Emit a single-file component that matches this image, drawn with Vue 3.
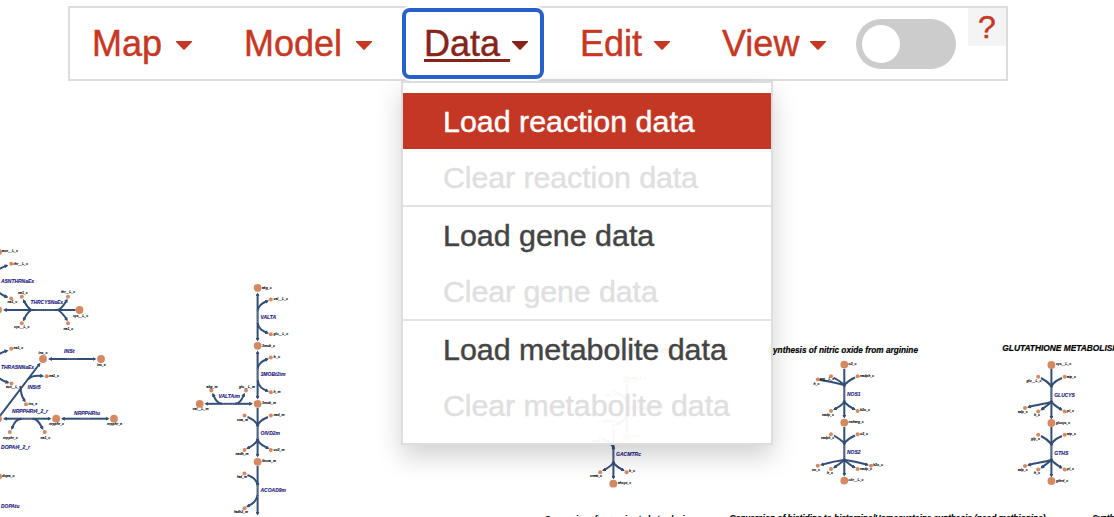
<script setup>
// Each width runs from the start of the word to the end of its caret
const menus = [
  { label: 'Map', width: 100 },
  { label: 'Model', width: 128 },
  { label: 'Data', width: 104, open: true },
  { label: 'Edit', width: 90 },
  { label: 'View', width: 104 },
]

const groups = [
  [{ label: 'Load reaction data', active: true }, { label: 'Clear reaction data', disabled: true }],
  [{ label: 'Load gene data' }, { label: 'Clear gene data', disabled: true }],
  [{ label: 'Load metabolite data' }, { label: 'Clear metabolite data', disabled: true }],
]

// Metabolite nodes: x, y, radius
const nodes = [
  [-1, 252, 3], [11.2, 263.7, 2], [11.2, 298.4, 2], [21.8, 296.8, 2], [21.8, 323.3, 2],
  [68, 296.8, 2], [68, 323.3, 2], [79.5, 310, 3.9], [-2, 310, 3.9],
  [11.2, 348.7, 2], [43, 359, 3.9], [101, 359, 3.9], [46.7, 376.2, 2], [11.5, 383.5, 2], [26, 404.2, 2],
  [-2, 418.7, 3.9], [56.2, 418.7, 3.9], [114, 418.7, 3.9], [9.8, 432, 2], [44.7, 432, 2], [-1, 476.5, 3],
  [257.6, 287.8, 3.9], [270.8, 299.5, 2], [270.8, 334.2, 2], [257.6, 345.8, 3.9], [270.8, 357.4, 2],
  [270.8, 392.2, 2], [257.6, 403.8, 3.9], [199.7, 403.8, 3.9], [211.3, 390.6, 2], [246, 390.6, 2],
  [244.5, 415.5, 2], [270.8, 415.5, 2], [244.5, 450, 2], [270.8, 450, 2], [257.6, 461.8, 3.9],
  [244.5, 473.4, 2], [244.5, 508.2, 2],
  [626.7, 379.3, 3.9], [613.4, 391.2, 2], [613.4, 425.6, 2], [626.7, 437.3, 3.9], [600, 437.5, 2],
  [600.2, 472.2, 2], [626.6, 472.2, 2], [613.3, 483.7, 3.9],
  [844.3, 364.6, 3.9], [831, 376.3, 2], [817.8, 379.6, 2], [857.6, 376.3, 2], [831, 411, 2],
  [857.6, 411, 2], [844.3, 422.6, 3.9], [831, 434.3, 2], [857.6, 434.3, 2], [817.8, 465.8, 2],
  [831, 469, 2], [857.6, 469, 2], [871, 465.8, 2], [844.3, 480.6, 3.9],
  [1051.4, 365, 3.9], [1038.2, 376.8, 2], [1064.7, 376.8, 2], [1025, 408, 2], [1038.2, 411.5, 2],
  [1064.7, 411.5, 2], [1051.4, 423, 3.9], [1038.2, 434.8, 2], [1064.7, 434.8, 2], [1025, 466, 2],
  [1038.2, 469.5, 2], [1064.7, 469.5, 2], [1051.4, 481, 3.9],
]

// Edges that end in an arrowhead
const arrows = [
  'M-8 276C-4 270 1 267.5 7 265.6', 'M-8 283C-4 291 1 295 7 297',
  'M58 310H4.5', 'M31 310C27 307 25 303 23.7 300.5', 'M31 310C27 313 25 317 23.7 320',
  'M58 310C63 308 65 303 66.8 300', 'M58 310C63 313 65 317 66.8 320',
  'M-6 358C-2 354 3 352 7 350.8', 'M70 359H49.5', 'M70 359H95',
  'M0 416L39.5 364', 'M28 379.5C31 375.5 37 375.3 42.5 376', 'M-5 374C-1 379 3 381 8 382.5', 'M20.8 388C20.5 394 22 397 24.7 401',
  'M28 418.7H4.5', 'M28 418.7H50', 'M22 418.7C16 419 14 423 12 428.5', 'M33 418.7C38 419 40 424 42.5 428.5',
  'M85 418.7H62.5', 'M85 418.7H108',
  'M257.6 317V294', 'M257.6 317V340', 'M257.6 311C258.5 305 262.5 303 267.5 301', 'M257.6 323C258.5 329 262.5 331 267.5 333',
  'M257.6 374V352', 'M257.6 374V398', 'M257.6 369C258.5 363 262.5 361 267.5 359', 'M257.6 380C258.5 387 262.5 389 267.5 391',
  'M228 403.8H206', 'M228 403.8H251.5', 'M222 403.8C217 403.5 215 399 213 394.2', 'M235 403.8C240 403.5 242 399 244.2 394.2',
  'M257.6 408V456', 'M257.6 440C255 445 252 446 247.5 448.3', 'M257.6 440C260 445 264 446 268 448.3',
  'M257.6 466V514', 'M257.6 495C256 502 252 504 247.5 506.5',
  'M626.7 408V385', 'M626.7 408V432', 'M626.7 402C625 396 621 395 617 393', 'M626.7 414C625 421 621 422 617 424.3',
  'M613.4 429V478', 'M613.4 447C610 442 607 441 603 439',
  'M613.3 463C611 466 608 468 603.5 470.3', 'M613.3 463C616 466 619 468 623.4 470.3',
  'M844.3 369V417', 'M844.3 402C842 405 839 407 834.4 409.3', 'M844.3 402C847 405 850 407 854.4 409.3',
  'M844.3 427V475', 'M844.3 460C835 461 828 463 821.5 464.8', 'M844.3 460C841 463 838 465 834.3 467.3',
  'M844.3 460C848 463 850 465 854.4 467.3', 'M844.3 460C854 461 860 463 867.5 464.8',
  'M1051.4 369V418', 'M1051.4 402C1044 404 1036 405 1028.5 407', 'M1051.4 402C1048 405 1045 407 1041.6 409.6',
  'M1051.4 402C1054 405 1057 407 1061.4 409.6',
  'M1051.4 427V476', 'M1051.4 460C1044 462 1036 463 1028.5 465', 'M1051.4 460C1048 463 1045 465 1041.6 467.6',
  'M1051.4 460C1054 463 1057 465 1061.4 467.6',
]

// Plain connecting edges
const lines = [
  'M58 310H75.5', 'M257.6 425C255 420 252 419 247.5 417', 'M257.6 425C260 420 264 419 268 417',
  'M257.6 484C255 478 252 477 247.5 475',
  'M844.3 385C841 382 838 380 833.5 377.5', 'M844.3 385C847 382 850 380 855 377.5', 'M844.3 385C836 383 827 381 819 379.8',
  'M844.3 443C841 440 838 438 834 435.5', 'M844.3 443C847 440 850 438 855 435.5',
  'M1051.4 386C1048 382 1045 380 1041 378', 'M1051.4 386C1054 382 1057 380 1062 378',
  'M1051.4 444C1048 440 1045 438 1041 436', 'M1051.4 444C1054 440 1057 438 1062 436',
]

// Junctions where side edges join the main edge
const junctions = [
  [30, 310], [60, 310], [257.6, 425], [257.6, 440], [257.6, 484], [613.4, 448], [613.4, 463],
  [844.3, 385], [844.3, 402], [844.3, 443], [844.3, 460],
  [1051.4, 386], [1051.4, 402], [1051.4, 444], [1051.4, 460],
]

// Light stretches in the middle of each reaction: x1, y1, x2, y2
const marks = [
  [35, 310, 55, 310], [67, 359, 77, 359], [22, 418.7, 33, 418.7], [81, 418.7, 90, 418.7],
  [257.6, 310, 257.6, 323], [257.6, 368, 257.6, 381], [223, 403.8, 235, 403.8], [257.6, 427, 257.6, 439],
  [257.6, 485, 257.6, 497], [613.4, 450, 613.4, 461], [844.3, 388, 844.3, 400], [844.3, 446, 844.3, 458],
  [1051.4, 388, 1051.4, 400], [1051.4, 446, 1051.4, 458],
]

// Metabolite labels: text, x, baseline, width
const labels = [
  ['asn__L_c', 2, 252.2, 16], ['thr__L_c', 13.5, 264.6, 14.5], ['na1_c', 7.5, 303, 9.5], ['na1_c', 18, 294, 9.5],
  ['cys__L_c', 14, 328.3, 15.5], ['thr__L_c', 61, 293.2, 14], ['na1_c', 63.5, 330.2, 9.5], ['cys__L_c', 73, 317, 15],
  ['na1_c', 13.5, 349.4, 9.5], ['ins_c', 38.5, 354, 9], ['ins_e', 97, 366, 8.5], ['na1_c', 49, 376.8, 10],
  ['asn__L_e', 6, 387.5, 15], ['ins_e', 28.5, 404.6, 8.5], ['nrpphr_c', 49, 425.2, 15], ['nrpphr_e', 107, 425.2, 15],
  ['nrpphr_c', 3, 439, 14.5], ['na1_c', 40.5, 439.2, 9.5], ['dopa_c', 2, 477, 12.5],
  ['akg_c', 262, 288.5, 9.5], ['val__L_c', 273.5, 299.5, 14.5], ['glu__L_c', 273.5, 334.6, 14.5],
  ['3mob_c', 262, 346.5, 13], ['h_c', 273.5, 357.8, 6.5], ['h_m', 273.5, 393, 7], ['3mob_m', 262, 404.3, 14],
  ['val__L_m', 192.5, 410.3, 16], ['akg_m', 206.5, 387.8, 11], ['glu__L_m', 239, 387.8, 16],
  ['coa_m', 237, 420.5, 11], ['nad_m', 273.5, 416, 11], ['nadh_m', 235.5, 455, 13], ['co2_m', 273.5, 450.7, 11],
  ['ibcoa_m', 262, 462.4, 14], ['fad_m', 237, 478, 10], ['fadh2_m', 234, 513.2, 14],
  ['arg__L_c', 631, 379, 15], ['gly_c', 606, 396, 9], ['gudac_c', 602, 422.3, 13], ['orn_c', 631, 437, 9],
  ['amet_c', 592, 441.5, 12], ['creat_c', 590, 477, 12], ['h_c', 629, 471.8, 6], ['ahcys_c', 618, 484.4, 13],
  ['o2_c', 848.5, 365.3, 8], ['nadph_c', 860, 376.5, 14], ['h_c', 813.5, 385, 6], ['arg__L_c', 820, 380.2, 14],
  ['nadp_c', 822, 416.2, 12], ['h2o_c', 860, 411.2, 10], ['nwharg_c', 848.5, 423.3, 15], ['nadph_c', 821, 439, 13],
  ['o2_c', 860, 434.6, 8], ['no_c', 812, 471.2, 8], ['h_c', 827, 474.2, 6], ['nadp_c', 860, 469.5, 12],
  ['h2o_c', 873, 466, 10], ['citr__L_c', 848.5, 481.3, 15],
  ['cys__L_c', 1056, 365, 15], ['glu__L_c', 1026.5, 382.2, 15], ['atp_c', 1067, 377.5, 9], ['adp_c', 1018, 413.3, 9.5],
  ['h_c', 1034, 416.2, 6], ['pi_c', 1067, 411.5, 7], ['glucys_c', 1056, 423.6, 14], ['gly_c', 1031, 440.2, 9],
  ['atp_c', 1067, 435.2, 9], ['adp_c', 1018, 471.3, 9.5], ['h_c', 1034, 474.2, 6], ['pi_c', 1067, 469.5, 7],
  ['gthrd_c', 1056, 481.7, 12],
]

// Reaction labels: text, x, baseline, width
const reactions = [
  ['ASNTHRNaEx', 1, 283.4, 33], ['THRCYSNaEx', 30.5, 304.2, 32.5], ['INSt', 64, 353.4, 10.5], ['THRASNNaEx', 1, 368.6, 33],
  ['INSt5', 27.5, 389.4, 13], ['NRPPHRt4_2_r', 12, 413.3, 36], ['NRPPHRtu', 74, 414.6, 26], ['DOPAt4_2_r', 1, 449.3, 29],
  ['DOPAtu', 1, 507.5, 18.5], ['VALTA', 260.5, 319.2, 15.5], ['3MOBt2im', 260.5, 376.3, 25], ['VALTAim', 218.5, 398.3, 21.5],
  ['OIVD2m', 260.5, 434.5, 19.5], ['ACOAD9m', 260.5, 492.3, 25.5], ['GLYAMDTRc', 630, 410, 30], ['GACMTRc', 616, 456.3, 25],
  ['NOS1', 847, 395.6, 13.5], ['NOS2', 847, 453.5, 13.5], ['GLUCYS', 1054.3, 396.5, 20.5], ['GTHS', 1054.3, 454.5, 14],
]

// Pathway titles: text, x, baseline, width
const titles = [
  ['Synthesis of nitric oxide from arginine', 767.5, 353, 150.5],
  ['GLUTATHIONE METABOLISM', 1002.3, 351.2, 117],
  ['Synthesis of creatine from arginine', 557, 353, 136],
  ['Conversion of carnosine to beta-alanine', 544.5, 521.6, 149],
  ['Conversion of histidine to histamine/Homocysteine synthesis (need methionine)', 729.5, 520.8, 316],
  ['Synthesis', 1092.5, 520.8, 37],
]
</script>

<template>
  <main class="page">
    <svg class="map" viewBox="0 0 1114 517" width="1114" height="517">
      <defs>
        <marker id="tip" viewBox="0 0 4 4" refX="2.4" refY="2" markerWidth="4" markerHeight="4" markerUnits="userSpaceOnUse" orient="auto">
          <path d="M0 0L4 2L0 4Z" fill="#334e75" />
        </marker>
      </defs>
      <g class="edges">
        <path v-for="(d, i) in arrows" :key="'a' + i" :d="d" marker-end="url(#tip)" />
        <path v-for="(d, i) in lines" :key="'l' + i" :d="d" />
        <circle v-for="(j, i) in junctions" :key="'j' + i" :cx="j[0]" :cy="j[1]" r="1.7" />
      </g>
      <line v-for="(m, i) in marks" :key="'m' + i" class="mark" :x1="m[0]" :y1="m[1]" :x2="m[2]" :y2="m[3]" />
      <circle v-for="(n, i) in nodes" :key="'n' + i" class="node" :cx="n[0]" :cy="n[1]" :r="n[2]" />
      <text v-for="(t, i) in labels" :key="'t' + i" class="label" :x="t[1]" :y="t[2]" :textLength="t[3]" lengthAdjust="spacingAndGlyphs">{{ t[0] }}</text>
      <text v-for="(t, i) in reactions" :key="'r' + i" class="reaction" :x="t[1]" :y="t[2]" :textLength="t[3]" lengthAdjust="spacingAndGlyphs">{{ t[0] }}</text>
      <text v-for="(t, i) in titles" :key="'h' + i" class="title" :x="t[1]" :y="t[2]" :textLength="t[3]" lengthAdjust="spacingAndGlyphs">{{ t[0] }}</text>
    </svg>

    <nav class="bar">
      <div v-for="m in menus" :key="m.label" class="menu" :class="{ open: m.open }" :style="{ width: m.width + 'px' }">
        <a class="trigger"><span class="word">{{ m.label + ' ' }}</span><svg class="caret" width="16" height="9" viewBox="0 0 16 9"><path d="M0 0H16V1L9 8.3Q8 9.3 7 8.3L0 1Z" /></svg></a>
        <div v-if="m.open" class="dropdown">
          <div v-for="(g, i) in groups" :key="i" class="group">
            <div v-for="it in g" :key="it.label" class="item" :class="{ active: it.active, disabled: it.disabled }">{{ it.label }}</div>
          </div>
        </div>
      </div>
      <div class="toggle"><span class="knob"></span></div>
      <div class="help">?</div>
    </nav>
  </main>
</template>

<style>
body {
  background: #fff;
  overflow: hidden;
}
</style>

<style scoped>
.page {
  position: relative;
  height: 517px;
  overflow: hidden;
  padding-top: 6px;
  box-sizing: border-box;
  font-family: "Liberation Sans", Arial, sans-serif;
}
.map {
  position: absolute;
  inset: 0;
}
.edges path {
  fill: none;
  stroke: #334e75;
  stroke-width: 2;
}
.edges circle {
  fill: #334e75;
}
.mark {
  stroke: #8794aa;
  stroke-width: 0.7;
  stroke-dasharray: 1.2 1;
}
.node {
  fill: #d58963;
}
.label {
  font-size: 4.3px;
  font-weight: bold;
  font-style: italic;
  fill: #111;
  stroke: #111;
  stroke-width: 0.12;
}
.reaction {
  font-size: 5.8px;
  font-weight: bold;
  font-style: italic;
  fill: #20157a;
  stroke: #20157a;
  stroke-width: 0.12;
}
.title {
  font-size: 8.5px;
  font-weight: bold;
  font-style: italic;
  fill: #000;
  stroke: #000;
  stroke-width: 0.2;
}
.bar {
  position: relative;
  display: flex;
  box-sizing: border-box;
  width: 940px;
  height: 75px;
  margin-left: 68px;
  padding-left: 22px;
  border: 2px solid #ddd;
  background: rgba(255, 255, 255, 0.95);
  -webkit-text-stroke: 0.45px currentColor;
}
.menu {
  position: relative;
  flex: none;
  margin-right: 52px;
}
.trigger {
  display: flex;
  align-items: center;
  justify-content: space-between;
  height: 71px;
  color: #c73824;
  font-size: 36px;
}
.word {
  width: 0;
  white-space: pre;
}
.caret {
  flex: none;
  margin-top: 4px;
  fill: currentColor;
}
.open .trigger {
  color: #86241a;
}
.open .word {
  text-decoration: underline;
  text-decoration-thickness: 3px;
  text-underline-offset: 3px;
  text-decoration-skip-ink: none;
}
.open .trigger::after {
  content: "";
  position: absolute;
  box-sizing: border-box;
  left: -22px;
  right: -16px;
  top: 0;
  height: 71px;
  border: 4px solid #285fc8;
  border-radius: 8px;
  box-shadow: 0 0 0 2px #fff;
  z-index: 2;
}
.dropdown {
  position: absolute;
  top: 73px;
  left: -23px;
  box-sizing: border-box;
  width: 372px;
  padding: 10px 0;
  border: 2px solid #ddd;
  background: rgba(255, 255, 255, 0.95);
  background-clip: padding-box;
  box-shadow: 0 12px 24px rgba(0, 0, 0, 0.175);
}
.group + .group {
  border-top: 2px solid #e3e3e3;
}
.item {
  height: 56px;
  padding-left: 40px;
  line-height: 57px;
  font-size: 30.4px;
  color: #444;
  white-space: nowrap;
}
.item.active {
  background: #c53725;
  color: #fff;
}
.item.disabled {
  color: #dfdfdf;
  letter-spacing: -0.1px;
}
.toggle {
  flex: none;
  width: 100px;
  height: 50px;
  box-sizing: border-box;
  margin: 11px 12px 0 -22px;
  padding: 6px;
  border-radius: 25px;
  background: #ccc;
}
.knob {
  display: block;
  width: 38px;
  height: 38px;
  border-radius: 50%;
  background: #fff;
}
.help {
  flex: none;
  width: 38px;
  height: 38px;
  background: #f4f4f4;
  color: #c73824;
  font-size: 32px;
  line-height: 38px;
  text-align: center;
}
</style>
